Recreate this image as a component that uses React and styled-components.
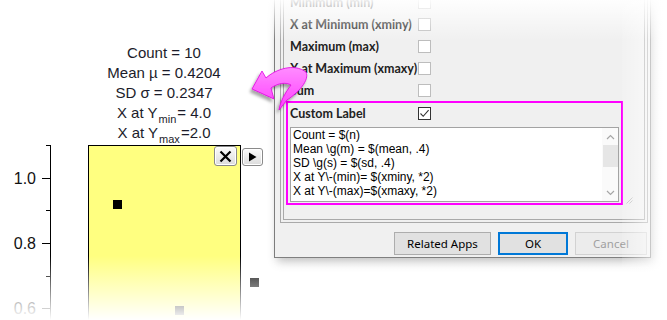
import React from "react";
import styled, { createGlobalStyle } from "styled-components";

const GlobalStyle = createGlobalStyle`
  html, body {
    margin: 0;
    padding: 0;
    background: #fff;
  }
  body {
    font-family: "Liberation Sans", Arial, sans-serif;
  }
`;

const Page = styled.div`
  position: relative;
  width: 667px;
  height: 320px;
  overflow: hidden;
  display: flex;
  align-items: flex-start;
  background: #fff;
`;

/* ---------- graph side ---------- */

const GraphPanel = styled.div`
  flex: none;
  width: 274px;
  height: 320px;
  display: flex;
  flex-direction: column;
`;

const StatsLabel = styled.div`
  position: relative;
  z-index: 1;
  flex: none;
  height: 145px;
  box-sizing: border-box;
  padding: 43px 0 0 54px;
  text-align: center;
  font-family: "Liberation Sans", Arial, sans-serif;
  font-size: 15px;
  line-height: 20px;
  color: #1c1c2a;
`;

const StatLine = styled.div`
  white-space: nowrap;
`;

const Sub = styled.sub`
  font-size: 11px;
  line-height: 0;
  vertical-align: -5px;
  padding: 0 1px;
  background: ${(p) => (p.$boxed ? "#fff" : "transparent")};
`;

const Plot = styled.div`
  position: relative;
  flex: 1;
`;

const PlotSvg = styled.svg`
  display: block;
`;

const GraphButton = styled.button`
  position: absolute;
  top: ${(p) => p.$top}px;
  left: ${(p) => p.$left}px;
  width: ${(p) => p.$w}px;
  height: ${(p) => p.$h}px;
  padding: 0;
  margin: 0;
  display: grid;
  place-items: center;
  border: 1px solid #8a8a8a;
  border-radius: 3px;
  background: linear-gradient(#fbfbfb, #dcdcdc);
  box-shadow: inset 0 0 0 1px #fff;
`;

/* ---------- dialog side ---------- */

const Dialog = styled.div`
  flex: none;
  width: 377px;
  margin-top: -30px;
  box-sizing: border-box;
  border: 1px solid #7c7c7c;
  background: #f0f0f0;
  padding: 4px 2px 2px 5px;
  display: flex;
  flex-direction: column;
  box-shadow: 3px 4px 9px rgba(0, 0, 0, 0.25);
  font-family: "Noto Sans", "Open Sans", sans-serif;
  font-size: 11.5px;
  color: #1e1e1e;
`;

const GroupOuter = styled.div`
  border: 1px solid #a9a9a9;
  padding: 2px;
`;

const GroupInner = styled.div`
  border: 1px solid #a9a9a9;
  padding: 12px 0 14px 6px;
  display: flex;
  flex-direction: column;
`;

const Row = styled.div`
  display: grid;
  grid-template-columns: 128px 13px;
  align-items: center;
  height: ${(p) => p.$h || 22}px;
`;

const RowLabel = styled.span`
  font-family: Lato, "Noto Sans", sans-serif;
  font-size: 12.5px;
  font-weight: 700;
  white-space: nowrap;
  color: #222;
`;

const Check = styled.span`
  box-sizing: border-box;
  width: 13px;
  height: 13px;
  border: 1px solid ${(p) => (p.$checked ? "#333" : "#bdbdbd")};
  background: #fff;
  display: grid;
  place-items: center;
`;

const HighlightLine = styled.div`
  display: flex;
  align-items: flex-end;
  gap: 3px;
  margin-left: -4px;
`;

const Highlight = styled.div`
  width: 337px;
  box-sizing: border-box;
  border: 2px solid #ff00ff;
  padding: 0 2px 1px 2px;
  display: flex;
  flex-direction: column;
`;

const TextBox = styled.div`
  margin-top: 4px;
  height: 75px;
  box-sizing: border-box;
  border: 1px solid #a3a3a3;
  background: #fff;
  display: flex;
`;

const TextLines = styled.div`
  flex: 1;
  padding: 0 2px;
  font-family: "Liberation Sans", Arial, sans-serif;
  font-size: 12px;
  line-height: 14px;
  color: #000;
  white-space: pre;
`;

const ScrollBar = styled.div`
  flex: none;
  width: 16px;
  background: #fafafa;
  display: flex;
  flex-direction: column;
  align-items: center;
`;

const ScrollArrow = styled.div`
  height: 17px;
  display: grid;
  place-items: center;
`;

const ScrollThumb = styled.div`
  width: 15px;
  height: 22px;
  background: #e6e6e6;
`;

const ScrollSpace = styled.div`
  flex: 1;
`;

const Grip = styled.svg`
  display: block;
  flex: none;
  margin-bottom: 1px;
`;

const ButtonBar = styled.div`
  margin-top: 9px;
  padding-right: 1px;
  display: flex;
  justify-content: flex-end;
  gap: 7px;
`;

const DialogButton = styled.button`
  width: ${(p) => p.$w}px;
  height: 23px;
  box-sizing: border-box;
  margin: 0;
  padding: 0;
  font-family: inherit;
  font-size: 11.5px;
  color: ${(p) => (p.$disabled ? "#a0a0a0" : "#000")};
  background: ${(p) => (p.$disabled ? "#ececec" : "#e1e1e1")};
  border: ${(p) =>
    p.$default
      ? "2px solid #0078d7"
      : p.$disabled
      ? "1px solid #d2d2d2"
      : "1px solid #adadad"};
`;

/* ---------- overlays ---------- */

const Fade = styled.div`
  position: absolute;
  pointer-events: none;
  z-index: 5;
  left: ${(p) => p.$left ?? 0}px;
  top: ${(p) => p.$top ?? 0}px;
  right: 0;
  bottom: ${(p) => p.$bottom ?? 0}px;
  background: ${(p) => p.$bg};
`;

const ArrowSvg = styled.svg`
  position: absolute;
  left: 240px;
  top: 55px;
  z-index: 6;
  overflow: visible;
`;

const rows = [
  "Minimum (min)",
  "X at Minimum (xminy)",
  "Maximum (max)",
  "X at Maximum (xmaxy)",
  "Sum",
];

const labelText = [
  "Count = $(n)",
  "Mean \\g(m) = $(mean, .4)",
  "SD \\g(s) = $(sd, .4)",
  "X at Y\\-(min)= $(xminy, *2)",
  "X at Y\\-(max)=$(xmaxy, *2)",
];

const ticks = [
  { y: 33, major: true, label: "1.0" },
  { y: 65 },
  { y: 98, major: true, label: "0.8" },
  { y: 131 },
  { y: 163, major: true, label: "0.6" },
];

const points = [
  { x: 113, y: 55 },
  { x: 250, y: 133 },
  { x: 175, y: 161 },
];

const Chevron = ({ down }) => (
  <svg width="9" height="6" viewBox="0 0 9 6">
    <path
      d={down ? "M1 1 L4.5 4.5 L8 1" : "M1 5 L4.5 1.5 L8 5"}
      fill="none"
      stroke="#a6a6a6"
      strokeWidth="1.2"
    />
  </svg>
);

const CheckBox = ({ checked }) => (
  <Check $checked={checked}>
    {checked && (
      <svg width="11" height="11" viewBox="0 0 11 11">
        <path d="M1.5 5.5 L4.2 8.3 L9.6 2.2" fill="none" stroke="#333" strokeWidth="1.1" />
      </svg>
    )}
  </Check>
);

const StatsGraph = () => (
  <GraphPanel>
    <StatsLabel>
      <StatLine>Count = 10</StatLine>
      <StatLine>Mean µ = 0.4204</StatLine>
      <StatLine>SD σ = 0.2347</StatLine>
      <StatLine>
        X at Y<Sub>min</Sub>= 4.0
      </StatLine>
      <StatLine>
        X at Y<Sub $boxed>max</Sub>=2.0
      </StatLine>
    </StatsLabel>
    <Plot>
      <PlotSvg width="274" height="175" viewBox="0 0 274 175">
        <rect x="88.5" y="0.5" width="152" height="200" fill="#ffff80" stroke="#000" />
        <line x1="50.5" y1="0" x2="50.5" y2="175" stroke="#000" />
        <line x1="46" y1="0.5" x2="50.5" y2="0.5" stroke="#000" />
        {ticks.map((t) => (
          <g key={t.y}>
            <line
              x1={t.major ? 42 : 46}
              y1={t.y + 0.5}
              x2="50.5"
              y2={t.y + 0.5}
              stroke="#000"
            />
            {t.label && (
              <text
                x="36"
                y={t.y + 6}
                textAnchor="end"
                fontFamily="Liberation Sans, Arial, sans-serif"
                fontSize="16"
                fill="#111"
              >
                {t.label}
              </text>
            )}
          </g>
        ))}
        {points.map((p) => (
          <rect key={p.x} x={p.x} y={p.y} width="9" height="9" fill="#000" />
        ))}
      </PlotSvg>
      <GraphButton $left={214} $top={1} $w={23} $h={20} aria-label="close">
        <svg width="13" height="13" viewBox="0 0 13 13">
          <path d="M1.5 1.5 L11.5 11.5 M11.5 1.5 L1.5 11.5" stroke="#000" strokeWidth="2.2" />
        </svg>
      </GraphButton>
      <GraphButton $left={242} $top={3} $w={21} $h={18} aria-label="next">
        <svg width="9" height="10" viewBox="0 0 9 10">
          <path d="M1 0.5 L8.5 5 L1 9.5 Z" fill="#000" />
        </svg>
      </GraphButton>
    </Plot>
  </GraphPanel>
);

const LabelDialog = () => (
  <Dialog>
    <GroupOuter>
      <GroupInner>
        {rows.map((r) => (
          <Row key={r}>
            <RowLabel>{r}</RowLabel>
            <CheckBox />
          </Row>
        ))}
        <HighlightLine>
          <Highlight>
            <Row $h={20}>
              <RowLabel>Custom Label</RowLabel>
              <CheckBox checked />
            </Row>
            <TextBox>
              <TextLines>
                {labelText.map((l) => (
                  <div key={l}>{l}</div>
                ))}
              </TextLines>
              <ScrollBar>
                <ScrollArrow>
                  <Chevron />
                </ScrollArrow>
                <ScrollThumb />
                <ScrollSpace />
                <ScrollArrow>
                  <Chevron down />
                </ScrollArrow>
              </ScrollBar>
            </TextBox>
          </Highlight>
          <Grip width="7" height="7" viewBox="0 0 7 7">
            <path d="M6.5 0.5 L0.5 6.5 M6.5 3.5 L3.5 6.5" stroke="#c4c4c4" strokeWidth="1" />
          </Grip>
        </HighlightLine>
      </GroupInner>
    </GroupOuter>
    <ButtonBar>
      <DialogButton $w={97}>Related Apps</DialogButton>
      <DialogButton $w={70} $default>
        OK
      </DialogButton>
      <DialogButton $w={72} $disabled>
        Cancel
      </DialogButton>
    </ButtonBar>
  </Dialog>
);

export default function App() {
  return (
    <>
      <GlobalStyle />
      <Page>
        <StatsGraph />
        <LabelDialog />
        <Fade
          $top={0}
          $bottom={280}
          $bg="linear-gradient(rgba(255,255,255,0.92), rgba(255,255,255,0))"
        />
        <Fade
          $left={622}
          $bg="linear-gradient(to right, rgba(255,255,255,0.1), rgba(255,255,255,0.85))"
        />
        <Fade
          $top={256}
          $bg="linear-gradient(rgba(255,255,255,0), rgba(255,255,255,1))"
        />
        <ArrowSvg width="75" height="60" viewBox="0 0 75 60">
          <defs>
            <linearGradient id="arrowFill" x1="0" y1="0" x2="0" y2="1">
              <stop offset="0" stopColor="#ff8cff" />
              <stop offset="1" stopColor="#ff3dff" />
            </linearGradient>
            <filter id="arrowShadow" x="-30%" y="-30%" width="160%" height="160%">
              <feDropShadow dx="-2" dy="3" stdDeviation="1.6" floodColor="#000" floodOpacity="0.35" />
            </filter>
          </defs>
          <path
            d="M12 34 L22 16 L26 23 C36 14 54 8 66 17 C70 25 58 38 47 45 L39 55 C40 47 45 38 51 30 C46 27 38 28 31 33 L34 44 Z"
            fill="url(#arrowFill)"
            stroke="#e000e0"
            strokeWidth="0.8"
            filter="url(#arrowShadow)"
          />
        </ArrowSvg>
      </Page>
    </>
  );
}
